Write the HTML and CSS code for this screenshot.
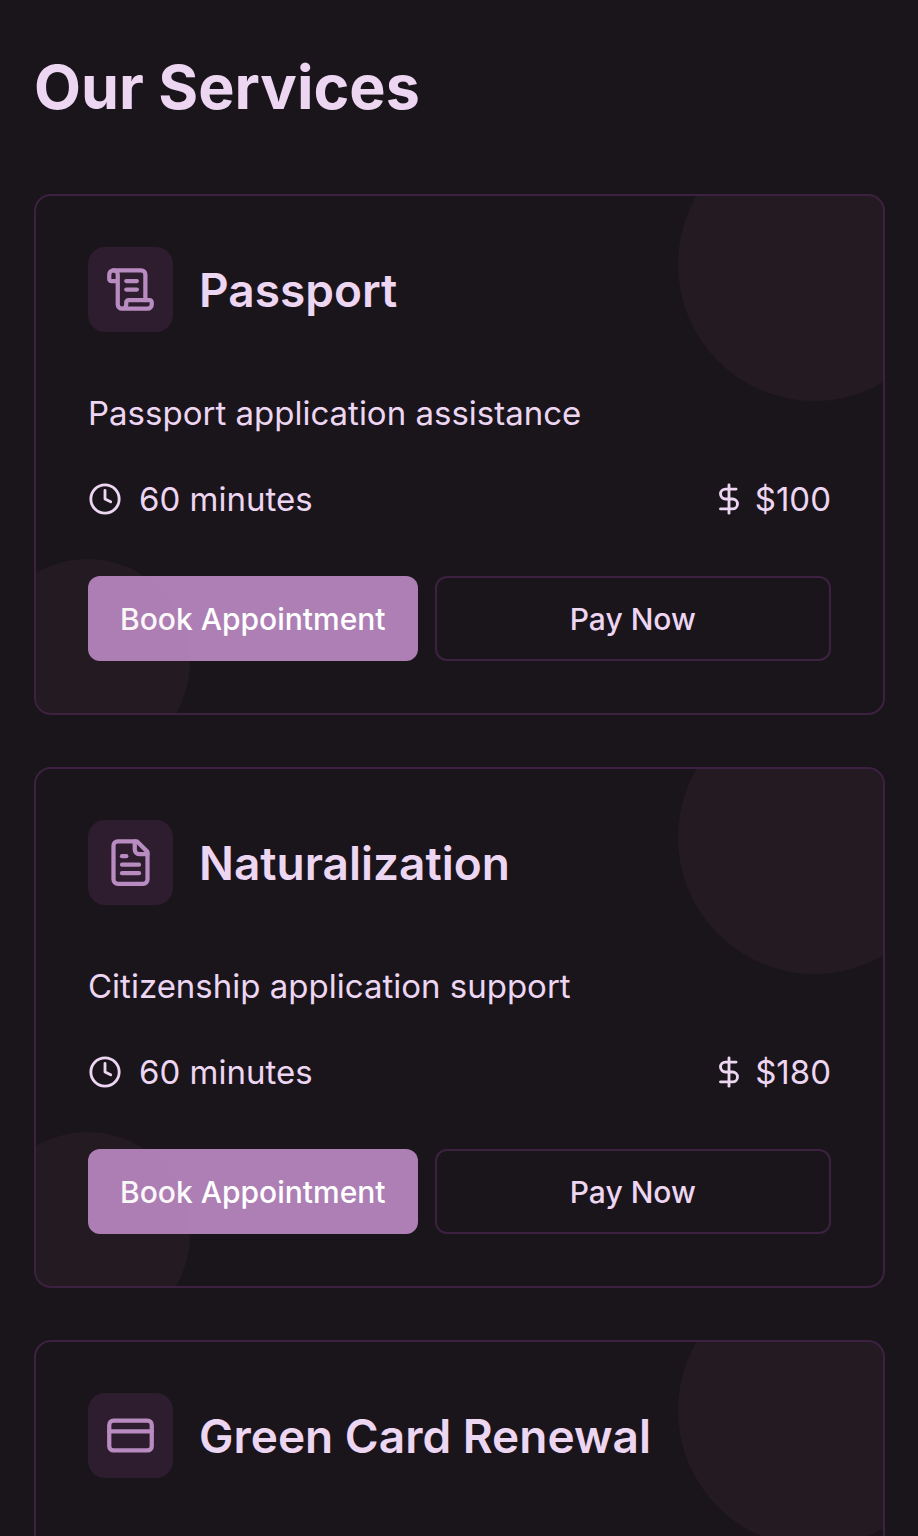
FILE: index.html
```html
<!DOCTYPE html>
<html lang="en">
<head>
    <meta charset="UTF-8">
    <meta name="viewport" content="width=device-width, initial-scale=1.0">
    <title>Our Services</title>
    <link rel="stylesheet" href="styles.css">
</head>
<body>
    <main class="services">
        <h1>Our Services</h1>

        <div class="service-list">
            <article class="card">
                <div class="card-header">
                    <div class="icon-box">
                        <svg class="icon icon-lg" viewBox="0 0 24 24" aria-hidden="true">
                            <path d="M15 12h-5"/>
                            <path d="M15 8h-5"/>
                            <path d="M19 17V5a2 2 0 0 0-2-2H4"/>
                            <path d="M8 21h12a2 2 0 0 0 2-2v-1a1 1 0 0 0-1-1H11a1 1 0 0 0-1 1v1a2 2 0 1 1-4 0V5a2 2 0 1 0-4 0v2a1 1 0 0 0 1 1h3"/>
                        </svg>
                    </div>
                    <h2>Passport</h2>
                </div>
                <p class="description">Passport application assistance</p>
                <div class="details">
                    <span class="duration">
                        <svg class="icon" viewBox="0 0 24 24" aria-hidden="true">
                            <circle cx="12" cy="12" r="10"/>
                            <path d="M12 6v6l4 2"/>
                        </svg>
                        60 minutes
                    </span>
                    <span class="price">
                        <svg class="icon" viewBox="0 0 24 24" aria-hidden="true">
                            <path d="M12 2v20"/>
                            <path d="M17 5H9.500a3.500 3.500 0 0 0 0 7h5a3.500 3.500 0 0 1 0 7H6"/>
                        </svg>
                        $100
                    </span>
                </div>
                <div class="actions">
                    <button type="button" class="btn btn-primary">Book Appointment</button>
                    <button type="button" class="btn btn-outline">Pay Now</button>
                </div>
            </article>

            <article class="card">
                <div class="card-header">
                    <div class="icon-box">
                        <svg class="icon icon-lg" viewBox="0 0 24 24" aria-hidden="true">
                            <path d="M15 2H6a2 2 0 0 0-2 2v16a2 2 0 0 0 2 2h12a2 2 0 0 0 2-2V7Z"/>
                            <path d="M14 2v4a2 2 0 0 0 2 2h4"/>
                            <path d="M10 9H8"/>
                            <path d="M16 13H8"/>
                            <path d="M16 17H8"/>
                        </svg>
                    </div>
                    <h2>Naturalization</h2>
                </div>
                <p class="description">Citizenship application support</p>
                <div class="details">
                    <span class="duration">
                        <svg class="icon" viewBox="0 0 24 24" aria-hidden="true">
                            <circle cx="12" cy="12" r="10"/>
                            <path d="M12 6v6l4 2"/>
                        </svg>
                        60 minutes
                    </span>
                    <span class="price">
                        <svg class="icon" viewBox="0 0 24 24" aria-hidden="true">
                            <path d="M12 2v20"/>
                            <path d="M17 5H9.500a3.500 3.500 0 0 0 0 7h5a3.500 3.500 0 0 1 0 7H6"/>
                        </svg>
                        $180
                    </span>
                </div>
                <div class="actions">
                    <button type="button" class="btn btn-primary">Book Appointment</button>
                    <button type="button" class="btn btn-outline">Pay Now</button>
                </div>
            </article>

            <article class="card">
                <div class="card-header">
                    <div class="icon-box">
                        <svg class="icon icon-lg" viewBox="0 0 24 24" aria-hidden="true">
                            <rect x="2" y="5" width="20" height="14" rx="2"/>
                            <path d="M2 10h20"/>
                        </svg>
                    </div>
                    <h2>Green Card Renewal</h2>
                </div>
            </article>
        </div>
    </main>
</body>
</html>
```

FILE: styles.css
```css
* {
    box-sizing: border-box;
}
body {
    margin: 0;
    background: #1a151b;
    color: #edd6f2;
    font-family: Inter, "Liberation Sans", sans-serif;
    font-size: 33px;
    line-height: 52px;
}
h1, h2, p {
    margin: 0;
}
.services {
    padding: 51px 33px 51px 34px;
}
h1 {
    font-size: 61px;
    line-height: 72px;
    font-weight: 700;
    margin-bottom: 71px;
}
.service-list {
    display: grid;
    grid-auto-rows: 1fr;
    gap: 52px;
}
.card {
    position: relative;
    overflow: hidden;
    padding: 51px 52px 52px;
    border: 2px solid #3c2140;
    border-radius: 17px;
}
/* decorative circles in the corners */
.card::before,
.card::after {
    content: "";
    position: absolute;
    border-radius: 50%;
    background: rgba(190, 125, 150, 0.06);
    pointer-events: none;
}
.card::before {
    top: -68px;
    right: -68px;
    width: 273px;
    height: 273px;
}
.card::after {
    bottom: -51px;
    left: -51px;
    width: 205px;
    height: 205px;
}
.card-header {
    display: flex;
    align-items: center;
    gap: 26px;
    margin-bottom: 55px;
}
.icon-box {
    display: flex;
    padding: 17px;
    border-radius: 17px;
    background: #2d1d2f;
    color: #b88cc0;
}
.icon {
    width: 34px;
    height: 34px;
    flex-shrink: 0;
    fill: none;
    stroke: currentColor;
    stroke-width: 2;
    stroke-linecap: round;
    stroke-linejoin: round;
}
.icon-lg {
    width: 51px;
    height: 51px;
}
h2 {
    font-size: 46px;
    line-height: 52px;
    font-weight: 600;
}
.description {
    margin-bottom: 34px;
}
.details {
    display: flex;
    justify-content: space-between;
    margin-bottom: 51px;
}
.duration,
.price {
    display: flex;
    align-items: center;
    gap: 17px;
}
.price {
    gap: 9px;
}
.actions {
    display: flex;
    gap: 17px;
}
.btn {
    height: 85px;
    padding: 0 32px;
    border: 2px solid #3c2140;
    border-radius: 12px;
    background: transparent;
    color: inherit;
    font: inherit;
    font-size: 30px;
    font-weight: 500;
    cursor: pointer;
}
.btn-primary {
    border: none;
    background: #ad7fb5;
    color: #fff;
}
.btn-outline {
    flex: 1;
}
```
